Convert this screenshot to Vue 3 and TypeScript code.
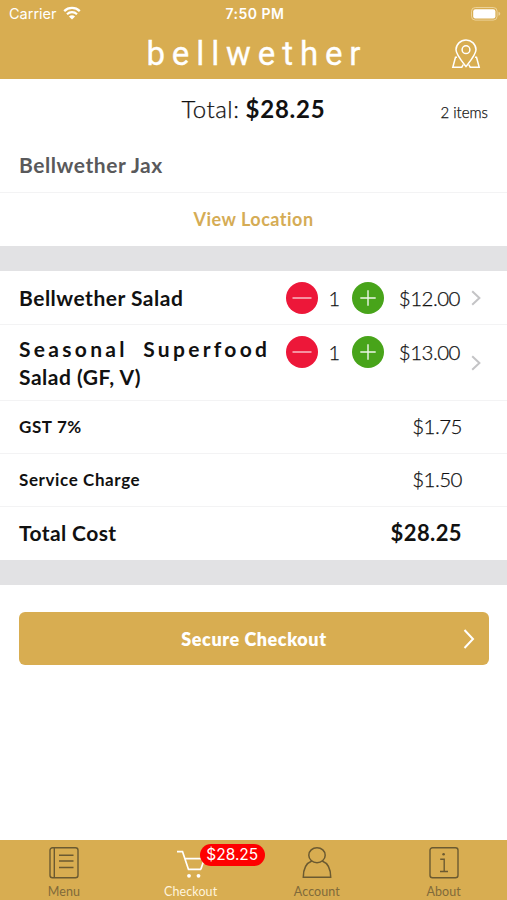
<script setup lang="ts">
interface CartItem {
  lines: { text: string; spaced: boolean }[]
  quantity: number
  price: string
}

interface Charge {
  label: string
  amount: string
  total: boolean
}

const items: CartItem[] = [
  { lines: [{ text: 'Bellwether Salad', spaced: false }], quantity: 1, price: '$12.00' },
  {
    lines: [
      { text: 'Seasonal Superfood', spaced: true },
      { text: 'Salad (GF, V)', spaced: false },
    ],
    quantity: 1,
    price: '$13.00',
  },
]

const charges: Charge[] = [
  { label: 'GST 7%', amount: '$1.75', total: false },
  { label: 'Service Charge', amount: '$1.50', total: false },
  { label: 'Total Cost', amount: '$28.25', total: true },
]
</script>

<template>
  <div class="screen">
    <header class="header">
      <div class="status">
        <div class="carrier">
          <span class="carrier-name">Carrier</span>
          <svg class="wifi" width="18" height="14" viewBox="0 0 18 14">
            <path d="M1.2 5.1A11.2 11.2 0 0 1 16.8 5.1" fill="none" stroke="#fff" stroke-width="2.3" />
            <path d="M4 8.2A7.2 7.2 0 0 1 14 8.2" fill="none" stroke="#fff" stroke-width="2.2" />
            <path d="M9 13.6L5.9 10.4Q9 7.9 12.1 10.4Z" fill="#fff" />
          </svg>
        </div>
        <span class="time">7:50 PM</span>
        <svg class="battery" width="30" height="14" viewBox="0 0 30 14">
          <rect x="0.5" y="0.5" width="25.6" height="12.6" rx="3.8" fill="none" stroke="#f3dfb0" stroke-opacity="0.75" />
          <rect x="2.2" y="2.2" width="22.2" height="9.2" rx="2.2" fill="#fff" />
          <path d="M27.5 4.8Q29.3 5.4 29.3 6.8T27.5 8.8Z" fill="#f3dfb0" fill-opacity="0.75" />
        </svg>
      </div>
      <div class="brand-row">
        <span class="brand">bellwether</span>
        <svg class="map-pin" width="30" height="30" viewBox="0 0 30 30" fill="none" stroke="#fff" stroke-width="1.5">
          <path d="M15 27.5C11 22.5 5 15.5 5 10.8A10 9.8 0 0 1 25 10.8C25 15.5 19 22.5 15 27.5Z" />
          <circle cx="15" cy="10.7" r="3.9" />
          <path d="M6 18.3H4.5L1.8 28.2H10.8L12.3 25.5M24 18.3H25.5L28.2 28.2H19.2L17.7 25.5" />
        </svg>
      </div>
    </header>

    <section class="summary">
      <div class="summary-total">
        <span class="total-label">Total:</span>
        <span class="total-value">$28.25</span>
      </div>
      <span class="count">2 items</span>
    </section>
    <div class="store">Bellwether Jax</div>
    <div class="location"><span class="location-link">View Location</span></div>
    <div class="band"></div>

    <div v-for="(item, i) in items" :key="i" class="item" :class="{ tall: item.lines.length > 1 }">
      <div class="name">
        <div v-for="line in item.lines" :key="line.text" class="name-line" :class="{ spaced: line.spaced }">{{ line.text }}</div>
      </div>
      <div class="controls">
        <svg width="32" height="32" viewBox="0 0 32 32">
          <circle cx="16" cy="16" r="16" fill="#ed1739" />
          <path d="M6.5 16H25.5" stroke="#fff" stroke-opacity="0.75" stroke-width="1.4" />
        </svg>
        <span class="quantity">{{ item.quantity }}</span>
        <svg width="32" height="32" viewBox="0 0 32 32">
          <circle cx="16" cy="16" r="16" fill="#48a41a" />
          <path d="M8.3 16H23.7M16 8.3V23.7" stroke="#fff" stroke-opacity="0.9" stroke-width="1.4" />
        </svg>
        <span class="price">{{ item.price }}</span>
      </div>
      <svg class="arrow" width="10" height="16" viewBox="0 0 10 16">
        <path d="M1.2 1.2L8.4 8L1.2 14.8" fill="none" stroke="#c4c4c6" stroke-width="2" />
      </svg>
    </div>

    <div v-for="charge in charges" :key="charge.label" class="charge" :class="{ total: charge.total }">
      <span class="charge-label">{{ charge.label }}</span>
      <span class="charge-amount">{{ charge.amount }}</span>
    </div>
    <div class="band closing"></div>

    <button class="checkout" type="button">
      <span class="checkout-text">Secure Checkout</span>
      <svg class="checkout-arrow" width="12" height="20" viewBox="0 0 12 20">
        <path d="M1.5 1L10 10L1.5 19" fill="none" stroke="#fff" stroke-width="2" />
      </svg>
    </button>

    <nav class="tabs">
      <div class="tab">
        <svg class="tab-icon" width="32" height="34" viewBox="0 0 32 34" fill="none" stroke="#6b5a31" stroke-width="1.4">
          <rect x="2" y="1.8" width="28" height="30" rx="2.5" />
          <path d="M6.3 2V31.6M11 9.3H25.5M11 15H25.5M11 21.5H25.5" />
        </svg>
        <span class="tab-label">Menu</span>
      </div>
      <div class="tab active">
        <svg class="tab-icon" width="32" height="34" viewBox="0 0 32 34" fill="none" stroke="#fff" stroke-width="1.7">
          <path d="M2 5.6H7.5L13.5 23.4H26M9.8 12.7H29.5L25.8 23.4" />
          <circle cx="14" cy="29.8" r="1.9" fill="#fff" stroke="none" />
          <circle cx="23.5" cy="29.8" r="1.9" fill="#fff" stroke="none" />
        </svg>
        <span class="badge">$28.25</span>
        <span class="tab-label">Checkout</span>
      </div>
      <div class="tab">
        <svg class="tab-icon" width="32" height="34" viewBox="0 0 32 34" fill="none" stroke="#6b5a31" stroke-width="1.5">
          <ellipse cx="16" cy="9.2" rx="8.2" ry="7.5" />
          <path d="M10.8 15C5.5 17 2.3 22 2.3 31.3H29.7C29.7 22 26.5 17 21.2 15" />
        </svg>
        <span class="tab-label">Account</span>
      </div>
      <div class="tab">
        <svg class="tab-icon" width="32" height="34" viewBox="0 0 32 34" fill="none" stroke="#6b5a31" stroke-width="1.4">
          <rect x="2" y="1.8" width="28" height="30" rx="2.5" />
          <path d="M12.2 13.3H16.2V25.5M12 25.5H20" />
          <circle cx="15.6" cy="8.3" r="1.3" fill="#6b5a31" stroke="none" />
        </svg>
        <span class="tab-label">About</span>
      </div>
    </nav>
  </div>
</template>

<style>
body {
  margin: 0;
  background: #fff;
}
</style>

<style scoped>
.screen {
  display: flex;
  flex-direction: column;
  width: 507px;
  height: 900px;
  overflow: hidden;
  background: #fff;
  color: #111;
  font-family: Lato, "Liberation Sans", sans-serif;
  font-variant-ligatures: none;
  white-space: nowrap;
}
.header {
  height: 79px;
  flex: none;
  background: #d8ad51;
  color: #fff;
}
.status {
  display: grid;
  grid-template-columns: 1fr auto 1fr;
  align-items: center;
  height: 27px;
  padding: 0 6px 0 9px;
  font-family: Inter, "Liberation Sans", sans-serif;
}
.carrier {
  display: flex;
  align-items: center;
  gap: 6px;
}
.carrier-name {
  font-size: 14.5px;
}
.wifi {
  margin-top: -2px;
}
.time {
  font-size: 14px;
  font-weight: 600;
  letter-spacing: 0.5px;
}
.battery {
  justify-self: end;
}
.brand-row {
  display: grid;
  grid-template-columns: 1fr auto 1fr;
  align-items: center;
  height: 52px;
}
.brand {
  grid-column: 2;
  margin-right: -6.9px;
  font-family: Roboto, "Liberation Sans", sans-serif;
  font-size: 33px;
  line-height: 53px;
  letter-spacing: 6.9px;
  -webkit-text-stroke: 0.3px #fff;
}
.map-pin {
  justify-self: end;
  margin-right: 26px;
}
.summary {
  display: grid;
  grid-template-columns: 1fr auto 1fr;
  height: 58px;
  padding: 0 19px;
}
.summary-total {
  grid-column: 2;
  display: flex;
  gap: 6px;
  font-size: 24px;
  line-height: 60px;
}
.total-label {
  font-weight: 300;
  letter-spacing: 0.5px;
  -webkit-text-stroke: 0.25px #111;
}
.total-value {
  font-weight: 700;
  letter-spacing: 0.8px;
}
.count {
  justify-self: end;
  font-size: 15px;
  font-weight: 300;
  line-height: 67px;
  -webkit-text-stroke: 0.25px #111;
}
.store {
  height: 55px;
  padding-left: 19px;
  border-bottom: 1px solid #f3f3f4;
  color: #59595b;
  font-size: 21px;
  font-weight: 700;
  letter-spacing: 0.55px;
  line-height: 55px;
}
.location {
  height: 53px;
  color: #d5ac55;
  font-size: 18px;
  font-weight: 700;
  letter-spacing: 0.5px;
  line-height: 53px;
  text-align: center;
}
.band {
  height: 25px;
  flex: none;
  background: #e2e2e4;
}
.item {
  display: grid;
  grid-template-columns: 266px 175px 1fr;
  box-sizing: border-box;
  height: 54px;
  padding: 0 26px 0 19px;
  border-bottom: 1px solid #f3f3f4;
}
.item.tall {
  height: 76px;
}
.name {
  font-size: 21px;
  font-weight: 700;
  letter-spacing: 0.5px;
  line-height: 28px;
  padding-top: 13px;
}
.tall .name {
  padding-top: 10px;
}
.name-line.spaced {
  letter-spacing: 3.3px;
  word-spacing: 7px;
}
.controls {
  display: flex;
  align-items: center;
  height: 54px;
}
.controls svg {
  flex: none;
  margin-left: 0.5px;
}
.quantity {
  width: 33.5px;
  font-size: 20px;
  font-weight: 300;
  text-align: center;
  -webkit-text-stroke: 0.25px #111;
}
.price {
  flex: 1;
  font-size: 20.5px;
  font-weight: 300;
  letter-spacing: -0.5px;
  text-align: right;
  -webkit-text-stroke: 0.25px #111;
}
.arrow {
  align-self: center;
  justify-self: end;
}
.charge {
  display: flex;
  justify-content: space-between;
  box-sizing: border-box;
  height: 53px;
  padding: 0 45px 0 19px;
  border-bottom: 1px solid #f3f3f4;
  line-height: 52px;
}
.charge-label {
  font-size: 17px;
  font-weight: 700;
  letter-spacing: 0.6px;
}
.charge-amount {
  font-size: 20.5px;
  font-weight: 300;
  letter-spacing: -0.5px;
  line-height: 51px;
  -webkit-text-stroke: 0.25px #111;
}
.total .charge-label,
.total .charge-amount {
  font-size: 21px;
  font-weight: 700;
  letter-spacing: 0.4px;
}
.total .charge-amount {
  font-size: 22px;
  -webkit-text-stroke: 0;
}
.charge.total {
  border-bottom: 0;
}
.closing {
  height: 25px;
}
.checkout {
  display: grid;
  grid-template-columns: 1fr auto 1fr;
  align-items: center;
  height: 53px;
  margin: 27px 18px 0 19px;
  padding: 0 14px;
  border: 0;
  border-radius: 6px;
  background: #d8ad51;
  color: #fff;
  font-family: inherit;
}
.checkout-text {
  grid-column: 2;
  font-size: 18px;
  font-weight: 800;
  letter-spacing: 0.55px;
}
.checkout-arrow {
  justify-self: end;
}
.tabs {
  display: grid;
  grid-template-columns: repeat(4, 1fr);
  height: 60px;
  flex: none;
  margin-top: auto;
  background: #d8ad51;
}
.tab {
  position: relative;
  display: flex;
  flex-direction: column;
  align-items: center;
  padding-top: 6px;
  color: #806a3a;
}
.tab:first-child {
  padding-left: 1px;
}
.tab.active {
  padding-left: 1px;
  color: #fff4dc;
}
.tab-label {
  font-size: 12.5px;
  line-height: 17px;
  letter-spacing: 0.1px;
  margin-top: 3px;
}
.badge {
  position: absolute;
  top: 4px;
  left: 73px;
  width: 65px;
  height: 22px;
  border-radius: 11px;
  background: #fe0000;
  color: #fff;
  font-family: Inter, "Liberation Sans", sans-serif;
  font-size: 15.5px;
  line-height: 22px;
  text-align: center;
}
</style>
